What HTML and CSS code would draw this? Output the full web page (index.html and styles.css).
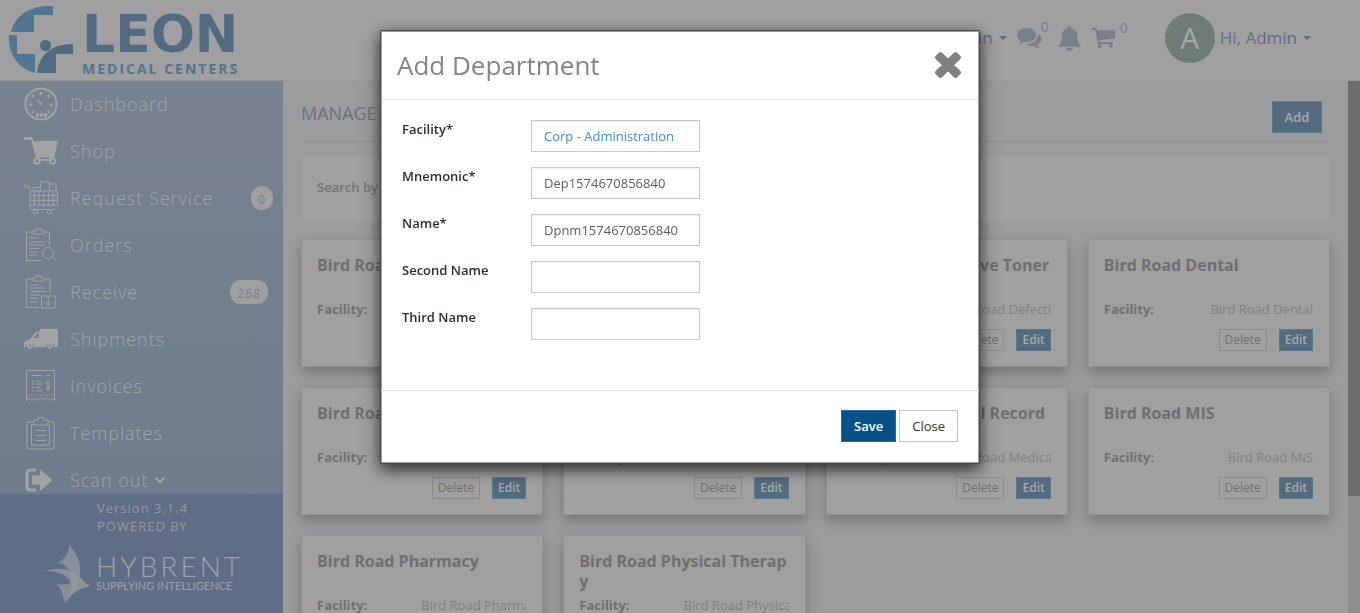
FILE: index.html
```html
<!DOCTYPE html>
<html lang="en">
<head>
<meta charset="utf-8">
<title>Manage Departments</title>
<link rel="stylesheet" href="styles.css">
</head>
<body>
<div class="app">
  <header class="topbar">
    <a class="brand" href="#" aria-label="Leon Medical Centers">
      <svg class="brand-mark" viewBox="0 0 66 68" aria-hidden="true">
        <path class="c-light" d="M44 0v9H25v17H2C6 10 20-1 44 0z"/>
        <path class="c-light" d="M0 29h8v19h18v19C8 62-1 48 0 29z"/>
        <circle class="c-dark" cx="36.500" cy="39.500" r="5.500"/>
        <path class="c-dark" d="M28 67c2-18 14-29 36-29v10H47v19z"/>
      </svg>
      <span class="brand-text">
        <span class="brand-name">LEON</span>
        <span class="brand-sub">MEDICAL CENTERS</span>
      </span>
    </a>
    <nav class="tools" aria-label="Account">
      <a class="tool-link" href="#">Admin <i class="caret"></i></a>
      <a class="tool tool-chat" href="#" aria-label="Messages">
        <svg width="25" height="22" viewBox="0 0 25 22"><path d="M9.500 1C4.300 1 0 4 0 8c0 2.200 1.300 4.200 3.400 5.500C3 15 2 16 1.200 16.800c2.300 0 4.200-.9 5.400-2 1 .2 1.900.3 2.900.3 5.300 0 9.700-3.100 9.700-7S14.800 1 9.500 1z"/><path d="M21 7c.5 5.500-4.500 9.700-11.300 10 1.700 1.500 4.200 2.300 6.900 2.100 2 1.400 3.800 2 6.200 1.700-1-.8-1.700-1.800-1.900-3 4.900-2.600 5.300-8 .1-10.800z"/></svg>
        <sup class="count">0</sup>
      </a>
      <a class="tool tool-bell" href="#" aria-label="Alerts">
        <svg width="23" height="25" viewBox="0 0 23 25"><path d="M11.500 0c1 0 1.600.8 1.500 2 4.500.8 6.300 4.500 6.300 8.500 0 4.500 1.200 7.500 3.700 9.500v.8H0V20c2.500-2 3.700-5 3.700-9.500C3.700 6.500 5.500 2.800 10 2c-.1-1.200.5-2 1.500-2zM8 22h7c-.3 1.900-1.600 3-3.500 3S8.300 23.900 8 22z"/></svg>
      </a>
      <a class="tool tool-cart" href="#" aria-label="Cart">
        <svg width="23" height="20" viewBox="0 0 23 20"><path d="M0 0h4.500l.9 2.200H23v8.200L7.500 12.300l.4 1.800H21v1.800H6L3.300 2H0z"/><circle cx="7.700" cy="18" r="2"/><circle cx="18.800" cy="18" r="2"/></svg>
        <sup class="count">0</sup>
      </a>
      <span class="avatar">A</span>
      <a class="tool-link" href="#">Hi, Admin <i class="caret"></i></a>
    </nav>
  </header>

  <div class="body">
    <aside class="sidebar">
      <nav class="menu" aria-label="Main">
        <a class="menu-item" href="#">
          <svg class="ico" viewBox="0 0 34 34"><circle class="ln2" cx="17" cy="17" r="15.600"/><path class="ln2" d="M17 5v3M8 8l2 2M26 8l-2 2M5 17.500h3M26 17.500h3M8 26l2-2M26 26l-2-2"/><path class="fl" d="M12 11l6.500 5.500-1.500 2zM12 26h3v4h-3zM16 26h3v4h-3zM20 26h3v4h-3z"/></svg>
          <span>Dashboard</span></a>
        <a class="menu-item" href="#">
          <svg class="ico" viewBox="0 0 34 34"><path class="fl" d="M0 3h8.500l1 4H34l-4 16.500H12L7 6H0z"/><path class="ln2" d="M14 26h14"/><circle class="ln2" cx="13" cy="27" r="2.700"/><circle class="ln2" cx="28.500" cy="27" r="2.700"/></svg>
          <span>Shop</span></a>
        <a class="menu-item" href="#">
          <svg class="ico" viewBox="0 0 34 34"><circle class="ln" cx="2" cy="5.500" r="1.800"/><path class="ln" d="M4 5.500h2v23h25M6 10h27.500v14H6M6 14.500h27.500M6 19.300h27.500M10.500 10v14M15 10v14M19.700 10v14M24.400 10v14M29 10v14M9 10V6.500h7M16.500 10V1h9v9M25.500 3H32v7"/><circle class="ln" cx="11.500" cy="31" r="2.200"/><circle class="ln" cx="25.500" cy="31" r="2.200"/></svg>
          <span>Request Service</span><b class="pill pill-end">0</b></a>
        <a class="menu-item" href="#">
          <svg class="ico" viewBox="0 0 34 34"><path class="ln" d="M9 4H2.500v28.500H17M21 4h4.500v13M9 3h2.500V1h6v2H20v3H9zM5 10h8M5 14h16M5 17h16M5 20.500h11M5 24h8M5 27h8M28 28.500l4.500 4.500"/><circle class="ln" cx="24" cy="25" r="5.500"/></svg>
          <span>Orders</span></a>
        <a class="menu-item" href="#">
          <svg class="ico" viewBox="0 0 34 34"><path class="ln" d="M9 4H2.500v28.500H15M21 4h5v14M9 3h2.500V1h6v2H20v3H9zM6 10h8M6 13h14M6 16.500h16M6 20h10M6 23.500h8M6 27h7M17.500 21H31v12H17.500zM24.300 22v8M20.500 26.500l3.800 3.800 3.800-3.800"/></svg>
          <span>Receive</span><b class="pill">268</b></a>
        <a class="menu-item" href="#">
          <svg class="ico" viewBox="0 0 34 34"><path class="fl" fill-rule="evenodd" d="M16 7h18v18h-4a4 4 0 0 0-8 0H10a4 4 0 0 0-8 0H0v-5l6-3 6-7 4-1zM9 16h6v-5l-2 1z"/><circle class="ln2" cx="6" cy="23.500" r="2"/><circle class="ln2" cx="26" cy="23.500" r="2"/></svg>
          <span>Shipments</span></a>
        <a class="menu-item" href="#">
          <svg class="ico" viewBox="0 0 34 34"><path class="ln" d="M2.500 32V1.500h28V32l-2-3-3 2-3-2-3 2-3-2-3 2-3-2-3 2-3-2zM8 6.500h10M23 6.500h3M8 12h2M8 15h2M8 18.500h2M8 22h2M12 12h4M12 15h6M12 18.500h4M12 22h6"/><path class="ln" stroke-dasharray="1 2" d="M4 26h26"/><path class="ln" d="M26 13.500c-1-1.500-4-1-4 1s4 1.500 4 3.500-3 2.500-4 1M24 11.500v10"/></svg>
          <span>Invoices</span></a>
        <a class="menu-item" href="#">
          <svg class="ico" viewBox="0 0 34 34"><path class="ln" d="M10 6H5q-2 0-2 2v23q0 2 2 2h23q2 0 2-2V8q0-2-2-2h-4M10 4h4V1.500h6V4h4v5H10zM10 9H7.500v20h18V9H24M12 14.500h10M12 19.500h10M12 24.500h10"/></svg>
          <span>Templates</span></a>
        <a class="menu-item" href="#">
          <svg class="ico" viewBox="0 0 34 34"><path class="ln3" d="M12 7H6q-3 0-3 3v14q0 3 3 3h6"/><path class="fl" d="M8 12.500h8V6.500L28.500 17 16 28v-6.500H8z"/></svg>
          <span>Scan out</span>
          <svg class="chev" viewBox="0 0 12 8"><path class="ln2" d="M1.500 1.500L6 6l4.500-4.500"/></svg></a>
      </nav>
      <footer class="side-foot">
        <span class="version">Version 3.1.4<br>POWERED BY</span>
        <a class="vendor" href="#" aria-label="Hybrent">
          <svg class="vendor-mark" viewBox="0 0 46 58" aria-hidden="true"><path class="v1" d="M24 0c12 12 15 30 6 44-4 7-7 11-10 14-3-9-3-14-9-19 6 1 11 1 15-1 2-10-4-20-14-20C20 14 24 8 24 0z"/><path class="v2" d="M0 26c16-5 29-1 36 7 2 3 5 6 10 8-9 1-20 7-26 17 6-9 7-13 6-20C22 30 14 26 0 26z"/></svg>
          <span class="vendor-text">
            <span class="vendor-name">HYBRENT</span>
            <span class="vendor-sub">SUPPLYING INTELLIGENCE</span>
          </span>
        </a>
      </footer>
    </aside>

    <main class="content">
      <div class="page-head">
        <h1>MANAGE DEPARTMENTS</h1>
        <button class="btn-add" type="button">Add</button>
      </div>
      <div class="search-panel">Search by</div>
      <div class="cards">
        <article class="card"><h2>Bird Road</h2><p class="row"><b>Facility:</b><span class="val">Bird Road</span></p><p class="acts"><button class="sm" type="button">Delete</button><button class="sm edit" type="button">Edit</button></p></article>
        <article class="card"><h2>Bird Road</h2><p class="row"><b>Facility:</b><span class="val">Bird Road</span></p><p class="acts"><button class="sm" type="button">Delete</button><button class="sm edit" type="button">Edit</button></p></article>
        <article class="card"><h2>Bird Road Defective Toner</h2><p class="row"><b>Facility:</b><span class="val">Bird Road Defective Toner</span></p><p class="acts"><button class="sm" type="button">Delete</button><button class="sm edit" type="button">Edit</button></p></article>
        <article class="card"><h2>Bird Road Dental</h2><p class="row"><b>Facility:</b><span class="val">Bird Road Dental</span></p><p class="acts"><button class="sm" type="button">Delete</button><button class="sm edit" type="button">Edit</button></p></article>
        <article class="card"><h2>Bird Road</h2><p class="row"><b>Facility:</b><span class="val">Bird Road</span></p><p class="acts"><button class="sm" type="button">Delete</button><button class="sm edit" type="button">Edit</button></p></article>
        <article class="card"><h2>Bird Road</h2><p class="row"><b>Facility:</b><span class="val">Bird Road</span></p><p class="acts"><button class="sm" type="button">Delete</button><button class="sm edit" type="button">Edit</button></p></article>
        <article class="card"><h2>Bird Road Medical Record</h2><p class="row"><b>Facility:</b><span class="val">Bird Road Medical Record</span></p><p class="acts"><button class="sm" type="button">Delete</button><button class="sm edit" type="button">Edit</button></p></article>
        <article class="card"><h2>Bird Road MIS</h2><p class="row"><b>Facility:</b><span class="val">Bird Road MIS</span></p><p class="acts"><button class="sm" type="button">Delete</button><button class="sm edit" type="button">Edit</button></p></article>
        <article class="card"><h2>Bird Road Pharmacy</h2><p class="row"><b>Facility:</b><span class="val">Bird Road Pharmacy</span></p><p class="acts"><button class="sm" type="button">Delete</button><button class="sm edit" type="button">Edit</button></p></article>
        <article class="card"><h2>Bird Road Physical Therapy</h2><p class="row"><b>Facility:</b><span class="val">Bird Road Physical Therapy</span></p><p class="acts"><button class="sm" type="button">Delete</button><button class="sm edit" type="button">Edit</button></p></article>
      </div>
    </main>
    <div class="scroll-track"><div class="scroll-thumb"></div></div>
  </div>
</div>

<div class="backdrop">
  <form class="modal" role="dialog" aria-labelledby="dlg-title">
    <div class="modal-head">
      <h2 id="dlg-title">Add Department</h2>
      <button class="modal-x" type="button" aria-label="Dismiss">
        <svg width="28" height="28" viewBox="0 0 28 28"><path d="M6.500 3L14 10.500 21.500 3 25 6.500 17.500 14 25 21.500 21.500 25 14 17.500 6.500 25 3 21.500 10.500 14 3 6.500z"/></svg>
      </button>
    </div>
    <div class="modal-body">
      <div class="field"><label for="facility">Facility*</label><select id="facility" class="ctl ctl-blue"><option>Corp - Administration</option></select></div>
      <div class="field"><label for="mnemonic">Mnemonic*</label><input id="mnemonic" class="ctl" type="text" value="Dep1574670856840"></div>
      <div class="field"><label for="name">Name*</label><input id="name" class="ctl" type="text" value="Dpnm1574670856840"></div>
      <div class="field"><label for="second">Second Name</label><input id="second" class="ctl" type="text"></div>
      <div class="field"><label for="third">Third Name</label><input id="third" class="ctl" type="text"></div>
    </div>
    <div class="modal-foot">
      <button class="btn btn-save" type="button">Save</button>
      <button class="btn" type="button">Close</button>
    </div>
  </form>
</div>
</body>
</html>
```
FILE: styles.css
```css
* { box-sizing: border-box; }
body { margin: 0; font-family: "Open Sans", "Noto Sans", sans-serif; font-size: 13px; line-height: 20px; color: #6c6c6c; }
h1, h2, p { margin: 0; font-weight: 400; }
a { color: inherit; text-decoration: none; }
button, input, select { font: inherit; margin: 0; border-radius: 0; }

.app { display: flex; flex-direction: column; height: 100vh; overflow: hidden; background: #9b9c9e; }

/* top bar */
.topbar { flex: none; height: 81px; display: flex; align-items: flex-start; justify-content: space-between; background: #a0a0a0; border-bottom: 1px solid #979899; padding-right: 49px; }
.brand { display: flex; padding: 6px 0 0 9px; gap: 7px; }
.brand-mark { width: 66px; height: 68px; }
.c-light { fill: #52768f; }
.c-dark { fill: #536a83; }
.brand-text { display: flex; flex-direction: column; }
.brand-name { font: 700 52px/56px "DejaVu Sans", sans-serif; color: #536a83; }
.brand-sub { font: 700 14px/14px "Open Sans", sans-serif; letter-spacing: 2px; color: #52768f; }
.tools { display: flex; align-items: center; height: 76px; color: #5f6f8a; }
.tool-link { display: flex; align-items: center; gap: 6px; font-size: 17px; line-height: 24px; }
.caret { border: 4px solid transparent; border-top-color: #5a6b88; border-bottom: 0; }
.tool { display: flex; fill: #78818b; color: #78818b; }
.tool svg { display: block; }
.tool-chat { margin-left: 10px; }
.tool-bell { margin-left: 9px; }
.tool-cart { margin-left: 11px; }
.count { font-size: 14px; line-height: 20px; height: 20px; margin: -10px 0 0 -1px; }
.tool-cart .count { margin-left: 5px; }
.avatar { width: 50px; height: 50px; margin: 0 5px 0 37px; border-radius: 50%; background: #6e7c74; color: #a4a7a5; font-size: 30px; line-height: 50px; text-align: center; }

/* side bar */
.body { flex: 1; min-height: 0; display: flex; }
.sidebar { flex: none; width: 283px; display: flex; flex-direction: column; background: linear-gradient(#79828f, #727f8d 45%, #707c8d 75%, #717c8c); }
.menu { flex: 1; min-height: 0; overflow: hidden; }
.menu-item { display: flex; align-items: center; height: 47px; padding: 0 15px 2px 24px; gap: 12px; font-size: 18px; font-weight: 300; letter-spacing: 1px; color: #a3a5a8; }
.ico { width: 34px; height: 34px; flex: none; }
.chev { width: 12px; height: 8px; margin-left: -6px; }
.ln, .ln2, .ln3 { fill: none; stroke: #a1a3a5; stroke-width: 1; }
.ln2 { stroke-width: 2; }
.ln3 { stroke-width: 3; }
.fl { fill: #a1a3a5; }
.pill { margin-left: auto; padding: 3px 7px 0; border-radius: 11px; background: #a0a0a0; color: #747f8d; font-size: 12px; font-weight: 400; line-height: 21px; }
.pill-end { margin-right: -5px; }
.side-foot { flex: none; height: 119px; padding-top: 5px; background: #5f6d87; color: #97999b; }
.version { display: block; padding-left: 97px; line-height: 18px; letter-spacing: 1px; }
.vendor { display: flex; padding: 10px 0 0 45px; gap: 5px; color: #a0a2a5; }
.vendor-mark { width: 46px; height: 58px; }
.v1 { fill: #87909a; }
.v2 { fill: #959a9f; fill-opacity: .8; }
.vendor-text { display: flex; flex-direction: column; padding-top: 8px; }
.vendor-name { font: 300 28px/27px Lato, sans-serif; letter-spacing: 3px; }
.vendor-sub { font: 400 11px/12px Lato, sans-serif; }

/* content */
.content { flex: 1; min-width: 0; overflow: hidden; padding: 0 18px; }
.page-head { display: flex; justify-content: space-between; align-items: center; height: 61px; padding: 12px 8px 0 0; border-bottom: 1px solid #8d9093; }
.page-head h1 { font-size: 18px; line-height: 24px; color: #66727f; padding-bottom: 8px; }
.btn-add { width: 50px; height: 32px; padding: 0; background: #536b7d; border: 1px solid #5a788d; color: #a5acb2; font-weight: 600; }
.search-panel { margin: 15px 0 18px; padding: 20px 16px; height: 64px; background: #a0a0a0; box-shadow: 0 0 1px #949494; font-weight: 600; color: #747474; }
.cards { display: grid; grid-template-columns: repeat(4, 1fr); gap: 20px; }
.card { min-width: 0; border: 1px solid #939393; background: #a0a0a0; padding: 15px 16px 15px 15px; box-shadow: 0 6px 12px rgba(0, 0, 0, .25); }
.card h2 { height: 40px; font-size: 16px; line-height: 20px; font-weight: 700; color: #6f6f6f; word-break: break-all; }
.row { display: flex; justify-content: space-between; margin-top: 4px; }
.row b { color: #707070; }
.val { max-width: 105px; overflow: hidden; white-space: nowrap; color: #818181; }
.acts { display: flex; justify-content: flex-end; gap: 12px; margin-top: 10px; }
.sm { height: 22px; padding: 0 5px; border: 1px solid #8c8c8c; background: transparent; color: #707070; font-size: 12px; line-height: 18px; }
.edit { background: #536b7d; border-color: #5a788d; color: #a5acb2; font-weight: 600; }
.scroll-track { flex: none; width: 12px; background: #8f8f8f; }
.scroll-thumb { height: 78%; background: #6c6c6c; }

/* dialog */
.backdrop { position: fixed; inset: 0; padding: 30px 16px; overflow: hidden; }
.modal { width: 100%; max-width: 600px; margin: 0 auto; background: #fff; border: 1px solid #4c4c4c; box-shadow: inset 0 0 0 1px #a0a0a0, 0 5px 15px rgba(0, 0, 0, .75); }
.modal-head { display: flex; justify-content: space-between; align-items: center; height: 69px; padding: 0 17px 0 16px; border-bottom: 1px solid #e2e2e2; }
.modal-head h2 { font-size: 26px; line-height: 36px; color: #858585; }
.modal-x { padding: 0; border: 0; background: none; }
.modal-x svg { display: block; }
.modal-x path { fill: #808080; stroke: #808080; stroke-width: 4; stroke-linejoin: round; }
.modal-body { display: flex; flex-direction: column; gap: 15px; padding: 20px 21px 50px; }
.field { display: grid; grid-template-columns: 129px 169px; }
.field label { font-weight: 600; color: #2b2f33; line-height: 18px; }
.ctl { appearance: none; width: 100%; height: 32px; padding: 0 12px; border: 1px solid #c8c8c8; background: #fff; color: #5f5f5f; box-shadow: inset 0 1px 1px rgba(0, 0, 0, .07); }
.ctl-blue { color: #428bca; }
.modal-foot { display: flex; justify-content: flex-end; gap: 3px; padding: 19px 21px 21px; border-top: 1px solid #e2e2e2; }
.btn { height: 32px; padding: 0 12px; border: 1px solid #c8c8c8; background: #fff; color: #333; }
.btn-save { background: #085088; border-color: #1f6cb0; color: #fff; font-weight: 600; }
```
